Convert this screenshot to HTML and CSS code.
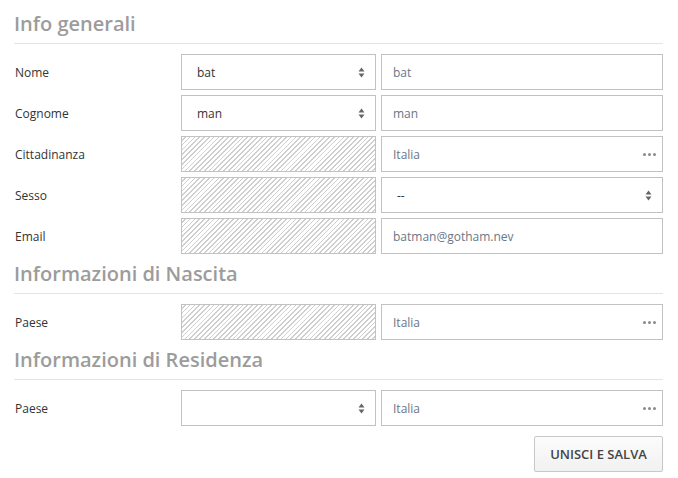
FILE: index.html
```html
<!DOCTYPE html>
<html lang="it">
<head>
<meta charset="utf-8">
<title>Info generali</title>
<link rel="stylesheet" href="styles.css">
</head>
<body>
<div class="form">
  <section class="section">
    <h2 class="section-title">Info generali</h2>
    <div class="rows">
      <div class="row">
        <span class="label">Nome</span>
        <div class="box select"><span class="value dark">bat</span><svg class="arrows" width="7" height="11" viewBox="0 0 7 11"><path d="M3.5 0.5L6.5 4.5H0.5Z" fill="#666"/><path d="M3.5 10.5L6.5 6.5H0.5Z" fill="#666"/></svg></div>
        <div class="box input"><span class="value">bat</span></div>
      </div>
      <div class="row">
        <span class="label">Cognome</span>
        <div class="box select"><span class="value dark">man</span><svg class="arrows" width="7" height="11" viewBox="0 0 7 11"><path d="M3.5 0.5L6.5 4.5H0.5Z" fill="#666"/><path d="M3.5 10.5L6.5 6.5H0.5Z" fill="#666"/></svg></div>
        <div class="box input"><span class="value">man</span></div>
      </div>
      <div class="row">
        <span class="label">Cittadinanza</span>
        <div class="box hatched"></div>
        <div class="box input"><span class="value">Italia</span><span class="dots"><i></i><i></i><i></i></span></div>
      </div>
      <div class="row">
        <span class="label">Sesso</span>
        <div class="box hatched"></div>
        <div class="box select"><span class="value dark">--</span><svg class="arrows" width="7" height="11" viewBox="0 0 7 11"><path d="M3.5 0.5L6.5 4.5H0.5Z" fill="#666"/><path d="M3.5 10.5L6.5 6.5H0.5Z" fill="#666"/></svg></div>
      </div>
      <div class="row">
        <span class="label">Email</span>
        <div class="box hatched"></div>
        <div class="box input"><span class="value">batman@gotham.nev</span></div>
      </div>
    </div>
  </section>
  <section class="section">
    <h2 class="section-title">Informazioni di Nascita</h2>
    <div class="rows">
      <div class="row">
        <span class="label">Paese</span>
        <div class="box hatched"></div>
        <div class="box input"><span class="value">Italia</span><span class="dots"><i></i><i></i><i></i></span></div>
      </div>
    </div>
  </section>
  <section class="section">
    <h2 class="section-title">Informazioni di Residenza</h2>
    <div class="rows">
      <div class="row">
        <span class="label">Paese</span>
        <div class="box select"><span class="value dark"></span><svg class="arrows" width="7" height="11" viewBox="0 0 7 11"><path d="M3.5 0.5L6.5 4.5H0.5Z" fill="#666"/><path d="M3.5 10.5L6.5 6.5H0.5Z" fill="#666"/></svg></div>
        <div class="box input"><span class="value">Italia</span><span class="dots"><i></i><i></i><i></i></span></div>
      </div>
    </div>
  </section>
  <div class="actions">
    <button class="btn" type="button">UNISCI E SALVA</button>
  </div>
</div>
</body>
</html>
```

FILE: styles.css
```css
* { box-sizing: border-box; }
html, body { margin: 0; padding: 0; background: #fff; }
body { font-family: "Open Sans", "Noto Sans", sans-serif; color: #333; }

.form {
  width: 678px;
  padding: 4px 15px 0 14px;
}

.section-title {
  margin: 6px 0 10px;
  padding: 0 0 5px;
  font-size: 20px;
  line-height: 28px;
  font-weight: 600;
  color: #9c9c9c;
  border-bottom: 1px solid #e4e4e4;
}

.rows {
  display: flex;
  flex-direction: column;
  gap: 5px;
}

.row {
  display: grid;
  grid-template-columns: 162px 195px 282px;
  column-gap: 5px;
  height: 36px;
}

.label {
  display: flex;
  align-items: center;
  font-size: 12px;
  color: #333;
  padding-left: 1px;
}

.box {
  height: 36px;
  border: 1px solid #c2c2c2;
  background: #fff;
  display: flex;
  align-items: center;
  font-size: 12px;
}

.select { padding: 0 10px 0 15px; }
.input { padding: 0 6px 0 11px; }

.value {
  flex: 1;
  color: #6a7786;
}
.value.dark { color: #333; }

.arrows { display: block; }

.dots {
  display: flex;
  gap: 2px;
}
.dots i {
  display: block;
  width: 3px;
  height: 3px;
  border-radius: 50%;
  background: #8a8a8a;
}

.hatched {
  background: repeating-linear-gradient(-45deg, #fff 0 1.2px, #cfcfcf 1.2px 2.4px, #fff 2.4px 3.4px);
}

.actions {
  display: flex;
  justify-content: flex-end;
  margin-top: 10px;
}

.btn {
  height: 36px;
  width: 129px;
  border: 1px solid #c8c8c8;
  border-radius: 2px;
  background: linear-gradient(#fcfcfc, #f1f1f1);
  box-shadow: 0 1px 1px rgba(0,0,0,0.08);
  font-family: "Open Sans", "Noto Sans", sans-serif;
  font-size: 13px;
  font-weight: 600;
  color: #444;
  padding: 0;
}
```
